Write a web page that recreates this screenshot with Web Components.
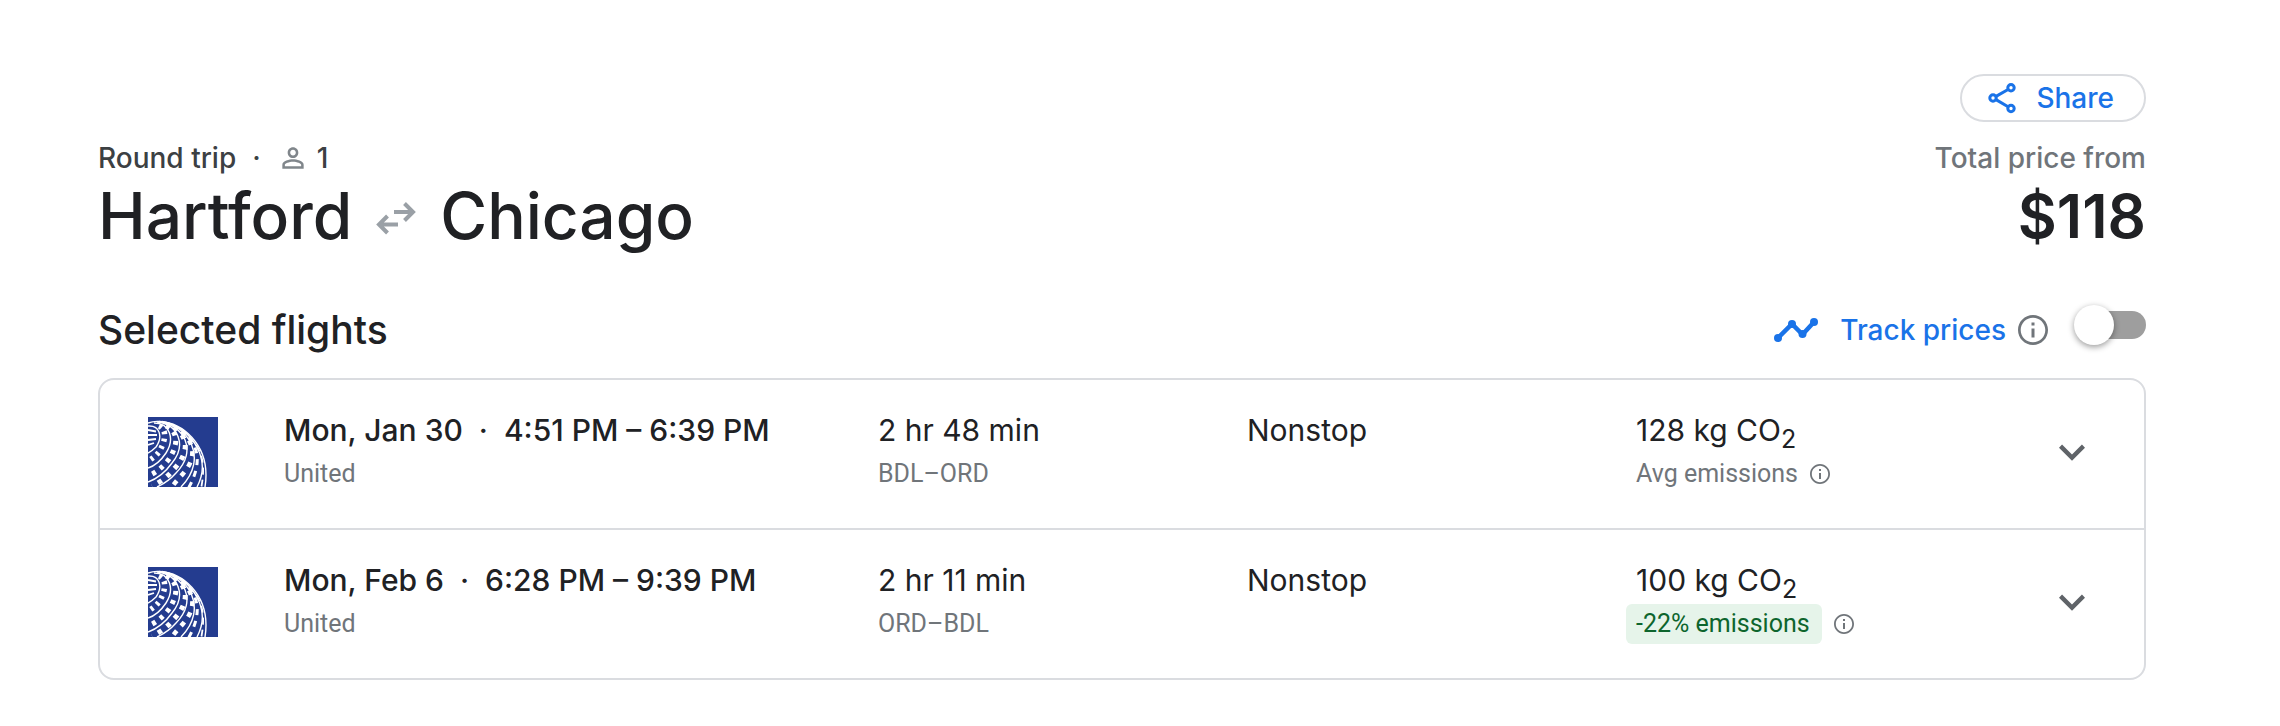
<!DOCTYPE html>
<html lang="en">
<head>
<meta charset="utf-8">
<title>Hartford to Chicago</title>
<style>
  body {
    margin: 0;
    background: #ffffff;
    color: #202124;
    font-family: Inter, "Liberation Sans", sans-serif;
  }
</style>
</head>
<body>
<trip-page>
  <trip-header slot="header" from="Hartford" to="Chicago" passengers="1" price="$118">Round trip</trip-header>
  <section-bar slot="bar">Selected flights</section-bar>
  <flight-row>
    <span slot="when">Mon, Jan 30 &nbsp;·&nbsp; 4:51 PM – 6:39 PM</span>
    <span slot="airline">United</span>
    <span slot="duration">2 hr 48 min</span>
    <span slot="route">BDL–ORD</span>
    <span slot="stops">Nonstop</span>
    <span slot="carbon">128 kg CO</span>
    <span slot="emissions">Avg emissions</span>
  </flight-row>
  <flight-row low>
    <span slot="when">Mon, Feb 6 &nbsp;·&nbsp; 6:28 PM – 9:39 PM</span>
    <span slot="airline">United</span>
    <span slot="duration">2 hr 11 min</span>
    <span slot="route">ORD–BDL</span>
    <span slot="stops">Nonstop</span>
    <span slot="carbon">100 kg CO</span>
    <span slot="emissions">-22% emissions</span>
  </flight-row>
</trip-page>

<script>
(function registerTripElements(globalScope) {
  function define(name, markup, setup) {
    const template = document.createElement("template");
    template.innerHTML = markup;

    globalScope.customElements.define(name, class extends HTMLElement {
      constructor() {
        super();
        this.attachShadow({ mode: "open" }).append(template.content.cloneNode(true));
      }

      connectedCallback() {
        if (setup) {
          setup(this, this.shadowRoot);
        }
      }
    });
  }

  define("info-button", `
    <style>
      :host { display: inline-flex; width: 20px; height: 20px; color: #70757a; }
      button { display: flex; width: 100%; height: 100%; padding: 0; border: 0; background: none; color: inherit; cursor: pointer; }
      svg { width: 100%; height: 100%; }
    </style>
    <button type="button" aria-label="More information">
      <svg viewBox="2 2 20 20" fill="currentColor" aria-hidden="true">
        <path d="M11 7h2v2h-2zm0 4h2v6h-2zm1-9C6.48 2 2 6.48 2 12s4.48 10 10 10 10-4.48 10-10S17.52 2 12 2zm0 18.200c-4.530 0-8.200-3.670-8.200-8.200s3.670-8.200 8.200-8.200 8.200 3.670 8.200 8.200-3.670 8.200-8.200 8.200z"></path>
      </svg>
    </button>
  `);

  define("share-button", `
    <style>
      :host { display: block; }
      button {
        display: flex;
        align-items: center;
        gap: 20px;
        box-sizing: border-box;
        height: 48px;
        padding: 0 30px 0 26px;
        border: 2px solid #dadce0;
        border-radius: 24px;
        background: #ffffff;
        color: #1a73e8;
        font: 500 28px/40px Inter, sans-serif;
        cursor: pointer;
      }
      svg { width: 28px; height: 32px; }
    </style>
    <button type="button">
      <svg viewBox="0 0 28 32" fill="none" stroke="currentColor" stroke-width="3" aria-hidden="true">
        <path d="M8 14.400 20.500 7.200M8 17.600l12.500 7.400"></path>
        <circle cx="5" cy="16" r="3.200"></circle>
        <circle cx="23" cy="5.700" r="3.200"></circle>
        <circle cx="23" cy="26.500" r="3.200"></circle>
      </svg>
      <slot></slot>
    </button>
  `);

  define("trip-header", `
    <style>
      :host { display: grid; grid-template-columns: 1fr auto; }
      share-button { grid-column: 2; justify-self: end; margin-bottom: 16px; }
      .meta { display: flex; align-items: center; font-size: 28px; line-height: 40px; font-weight: 500; color: #3c4043; }
      .meta .dot { margin: 0 16px; }
      .meta svg { width: 32px; height: 32px; margin-right: 8px; color: #80868b; }
      .meta.total { justify-content: flex-end; color: #70757a; }
      h1 { display: flex; align-items: center; gap: 24px; margin: 0; font-size: 64px; line-height: 76px; font-weight: 500; }
      h1 svg { width: 40px; height: 40px; color: #9aa0a6; }
      .price { font-size: 60px; line-height: 76px; font-weight: 600; text-align: right; }
    </style>
    <share-button>Share</share-button>
    <div class="meta">
      <slot></slot>
      <span class="dot">·</span>
      <svg viewBox="0 0 24 24" fill="currentColor" aria-hidden="true">
        <path d="M12 5.900c1.160 0 2.100.94 2.100 2.100s-.94 2.100-2.100 2.100S9.900 9.160 9.900 8s.94-2.100 2.100-2.100m0 9c2.970 0 6.100 1.460 6.100 2.100v1.100H5.900V17c0-.64 3.130-2.100 6.100-2.100M12 4C9.790 4 8 5.790 8 8s1.790 4 4 4 4-1.790 4-4-1.790-4-4-4zm0 9c-2.670 0-8 1.340-8 4v3h16v-3c0-2.660-5.330-4-8-4z"></path>
      </svg>
      <span id="passengers"></span>
    </div>
    <div class="meta total">Total price from</div>
    <h1>
      <span id="from"></span>
      <svg viewBox="0 -6 40 40" fill="none" stroke="currentColor" stroke-width="4" aria-hidden="true">
        <path d="M18 10h18M28.500 1.500 37 10l-8.500 8.500M22 22.500H4M11.500 14 3 22.500l8.500 8.500"></path>
      </svg>
      <span id="to"></span>
    </h1>
    <div class="price" id="price"></div>
  `, (host, root) => {
    for (const name of ["from", "to", "passengers", "price"]) {
      root.getElementById(name).textContent = host.getAttribute(name);
    }
  });

  define("toggle-switch", `
    <style>
      :host { display: flex; align-items: center; height: 42px; }
      input {
        appearance: none;
        display: grid;
        align-items: center;
        width: 72px;
        height: 40px;
        margin: 0;
        cursor: pointer;
      }
      input::before,
      input::after { content: ""; grid-area: 1 / 1; border-radius: 20px; }
      input::before { justify-self: end; width: 64px; height: 28px; background: #9e9e9e; }
      input::after { width: 40px; height: 40px; background: #ffffff; box-shadow: 0 2px 6px rgba(0, 0, 0, 0.4); }
      input:checked::before { background: #8ab4f8; }
      input:checked::after { justify-self: end; background: #1a73e8; }
    </style>
    <input type="checkbox" role="switch" aria-label="Track prices">
  `);

  define("section-bar", `
    <style>
      :host { display: flex; align-items: flex-start; justify-content: space-between; height: 48px; }
      h2 { margin: 0; font-size: 39px; line-height: 52px; font-weight: 500; }
      .track { display: flex; align-items: flex-start; }
      .label { display: flex; align-items: center; color: #1a73e8; font-size: 28px; line-height: 52px; font-weight: 500; }
      .label svg { width: 44px; height: 24px; margin-right: 22px; }
      info-button { width: 30px; height: 30px; margin: 0 26px 0 12px; }
    </style>
    <h2><slot></slot></h2>
    <div class="track">
      <div class="label">
        <svg viewBox="0 0 44 24" fill="currentColor" aria-hidden="true">
          <path d="M4 20 18 6l10.500 10.500L40 4" fill="none" stroke="currentColor" stroke-width="4.500"></path>
          <circle cx="4" cy="20" r="4"></circle>
          <circle cx="18" cy="6" r="4"></circle>
          <circle cx="28.500" cy="16" r="4"></circle>
          <circle cx="40" cy="4" r="4"></circle>
        </svg>
        <span>Track prices</span>
        <info-button></info-button>
      </div>
      <toggle-switch></toggle-switch>
    </div>
  `);

  define("airline-logo", `
    <style>
      :host { display: block; width: 70px; height: 70px; }
      svg { display: block; }
    </style>
    <svg width="70" height="70" viewBox="0 0 70 70" fill="none" stroke="#ffffff" role="img" aria-label="United">
      <rect width="70" height="70" fill="#243c8f" stroke="none"></rect>
      <!-- meridians of the globe, outermost first -->
      <g stroke-width="1.400">
        <path d="M0 6Q5 4 12 4.500C36 6 58 28 58 58Q58 64 57 70"></path>
        <path d="M20 6C44 14 64 42 49 70"></path>
        <path d="M14 4.500C38 8 62 40 33 70"></path>
        <path d="M11 4.500C36 8 50 34 28 56Q20 65 9 70"></path>
        <path d="M9 5C30 7 39 28 24 46Q14 60 0 65"></path>
        <path d="M6 6C22 6 27 22 18 36Q10 48 0 51"></path>
        <path d="M0 9C12 8 15 20 8 30Q4 34 0 36"></path>
      </g>
      <!-- grid blocks between the meridians -->
      <path d="M11 9C20 13 17 25 11 35Q7 40 0 44" stroke-width="5.500" stroke-dasharray="3 4.500"></path>
      <path d="M18 9C31 15 30 28 21 42Q12 54 0 59" stroke-width="5" stroke-dasharray="4 5.500"></path>
      <path d="M26 10C43 22 39 38 26 52Q17 63 4 69" stroke-width="5" stroke-dasharray="4.500 6.500"></path>
      <path d="M34 14C51 32 45 47 31 61L22 72" stroke-width="4.500" stroke-dasharray="5 6.500"></path>
      <path d="M41 20C54 37 50 54 40 72" stroke-width="3" stroke-dasharray="6 6"></path>
      <path d="M48 28C57 42 56 56 53 72" stroke-width="1.800" stroke-dasharray="7 5"></path>
      <path d="M0 13 8 14.500M0 18l9 0M0 23l8-1M0 28l6-2" stroke-width="1.800"></path>
    </svg>
  `);

  define("flight-row", `
    <style>
      :host {
        display: grid;
        grid-template-columns: 136px 594fr 369fr 389fr 410fr 52px;
        align-items: center;
        padding: 30px 46px 34px 48px;
      }
      :host(:not(:first-of-type)) { border-top: 2px solid #dadce0; }
      .cell { align-self: start; display: grid; gap: 4px; font-size: 30px; line-height: 40px; }
      .when { font-weight: 500; }
      .caption { display: flex; align-items: center; gap: 12px; color: #70757a; font: 25px/40px Roboto, sans-serif; }
      sub { font-size: 25px; line-height: 0; }
      :host([low]) .badge { margin-left: -10px; padding: 0 12px 0 10px; border-radius: 6px; background: #e6f4ea; color: #0d652d; }
      button { display: flex; width: 52px; height: 52px; padding: 0; border: 0; background: none; color: #5f6368; cursor: pointer; }
    </style>
    <airline-logo></airline-logo>
    <div class="cell when">
      <slot name="when"></slot>
      <div class="caption"><slot name="airline"></slot></div>
    </div>
    <div class="cell">
      <slot name="duration"></slot>
      <div class="caption"><slot name="route"></slot></div>
    </div>
    <div class="cell"><slot name="stops"></slot></div>
    <div class="cell">
      <div><slot name="carbon"></slot><sub>2</sub></div>
      <div class="caption"><span class="badge"><slot name="emissions"></slot></span><info-button></info-button></div>
    </div>
    <button type="button" aria-label="Flight details">
      <svg width="52" height="52" viewBox="0 0 24 24" fill="currentColor" aria-hidden="true">
        <path d="M16.590 8.590 12 13.170 7.410 8.590 6 10l6 6 6-6z"></path>
      </svg>
    </button>
  `);

  define("trip-page", `
    <style>
      :host { display: block; padding: 74px 134px 46px 98px; }
      ::slotted(section-bar) { margin: 50px 0 26px; }
      .card { border: 2px solid #dadce0; border-radius: 16px; }
    </style>
    <slot name="header"></slot>
    <slot name="bar"></slot>
    <div class="card"><slot></slot></div>
  `);
})(window);
</script>
</body>
</html>
